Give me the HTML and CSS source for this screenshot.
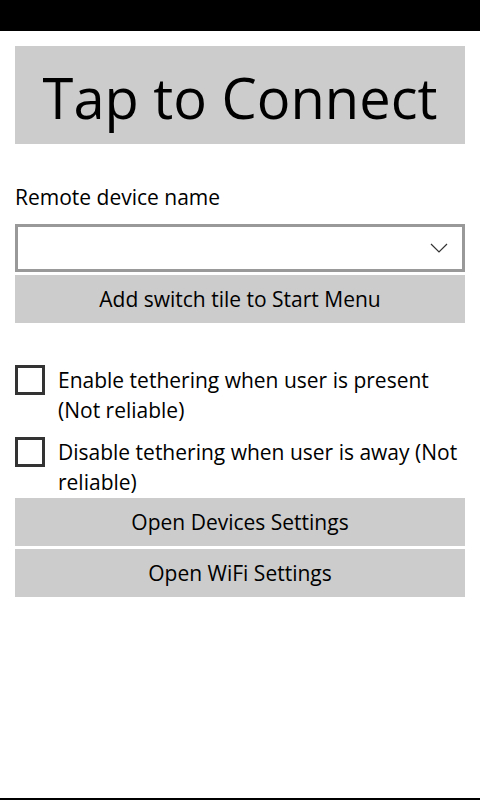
FILE: index.html
```html
<!DOCTYPE html>
<html lang="en">
<head>
<meta charset="utf-8">
<title>Tap to Connect</title>
<link rel="stylesheet" href="styles.css">
</head>
<body>
<div class="statusbar"></div>
<main class="content">
  <button class="btn btn-big">Tap to Connect</button>
  <div class="label">Remote device name</div>
  <div class="combo">
    <svg class="chevron" width="18" height="10" viewBox="0 0 18 10"><polyline points="1,1 9,9 17,1" fill="none" stroke="#333" stroke-width="1.2"/></svg>
  </div>
  <button class="btn btn-add">Add switch tile to Start Menu</button>
  <div class="checks">
    <label class="check"><span class="box"></span><span class="check-text">Enable tethering when user is present (Not reliable)</span></label>
    <label class="check"><span class="box"></span><span class="check-text">Disable tethering when user is away (Not reliable)</span></label>
  </div>
  <button class="btn btn-devices">Open Devices Settings</button>
  <button class="btn btn-wifi">Open WiFi Settings</button>
</main>
<div class="bottomline"></div>
</body>
</html>
```
FILE: styles.css
```css
html, body {
  margin: 0;
  padding: 0;
  background: #fff;
  height: 800px;
  overflow: hidden;
}
body {
  position: relative;
  font-family: "Open Sans", "Noto Sans", sans-serif;
  color: #000;
}
.statusbar {
  height: 31px;
  background: #000;
}
.content {
  display: flex;
  flex-direction: column;
  padding: 15px 15px 0;
}
.btn {
  display: flex;
  align-items: center;
  justify-content: center;
  border: none;
  margin: 0;
  padding: 0;
  background: #cccccc;
  color: #000;
  font-family: inherit;
  font-size: 21px;
  line-height: 1;
  width: 100%;
  height: 48px;
}
.btn-big {
  height: 98px;
  font-size: 56px;
  padding-top: 3px;
}
.label {
  margin-top: 38px;
  font-size: 21px;
  line-height: 30px;
}
.combo {
  margin-top: 12px;
  height: 48px;
  box-sizing: border-box;
  border: 3px solid #999;
  background: #fff;
  display: flex;
  align-items: center;
  justify-content: flex-end;
  padding-right: 14px;
}
.chevron {
  display: block;
}
.btn-add {
  margin-top: 3px;
}
.checks {
  margin-top: 42px;
  display: flex;
  flex-direction: column;
  gap: 12px;
}
.check {
  display: flex;
  align-items: flex-start;
  font-size: 21px;
  line-height: 30px;
}
.box {
  flex: none;
  width: 30px;
  height: 30px;
  box-sizing: border-box;
  border: 3px solid #333;
  margin-right: 13px;
}
.check-text {
  flex: 1;
}
.btn-devices {
  margin-top: 1px;
}
.btn-wifi {
  margin-top: 3px;
}
.bottomline {
  position: absolute;
  left: 0;
  right: 0;
  bottom: 0;
  height: 2px;
  background: #000;
}
```
